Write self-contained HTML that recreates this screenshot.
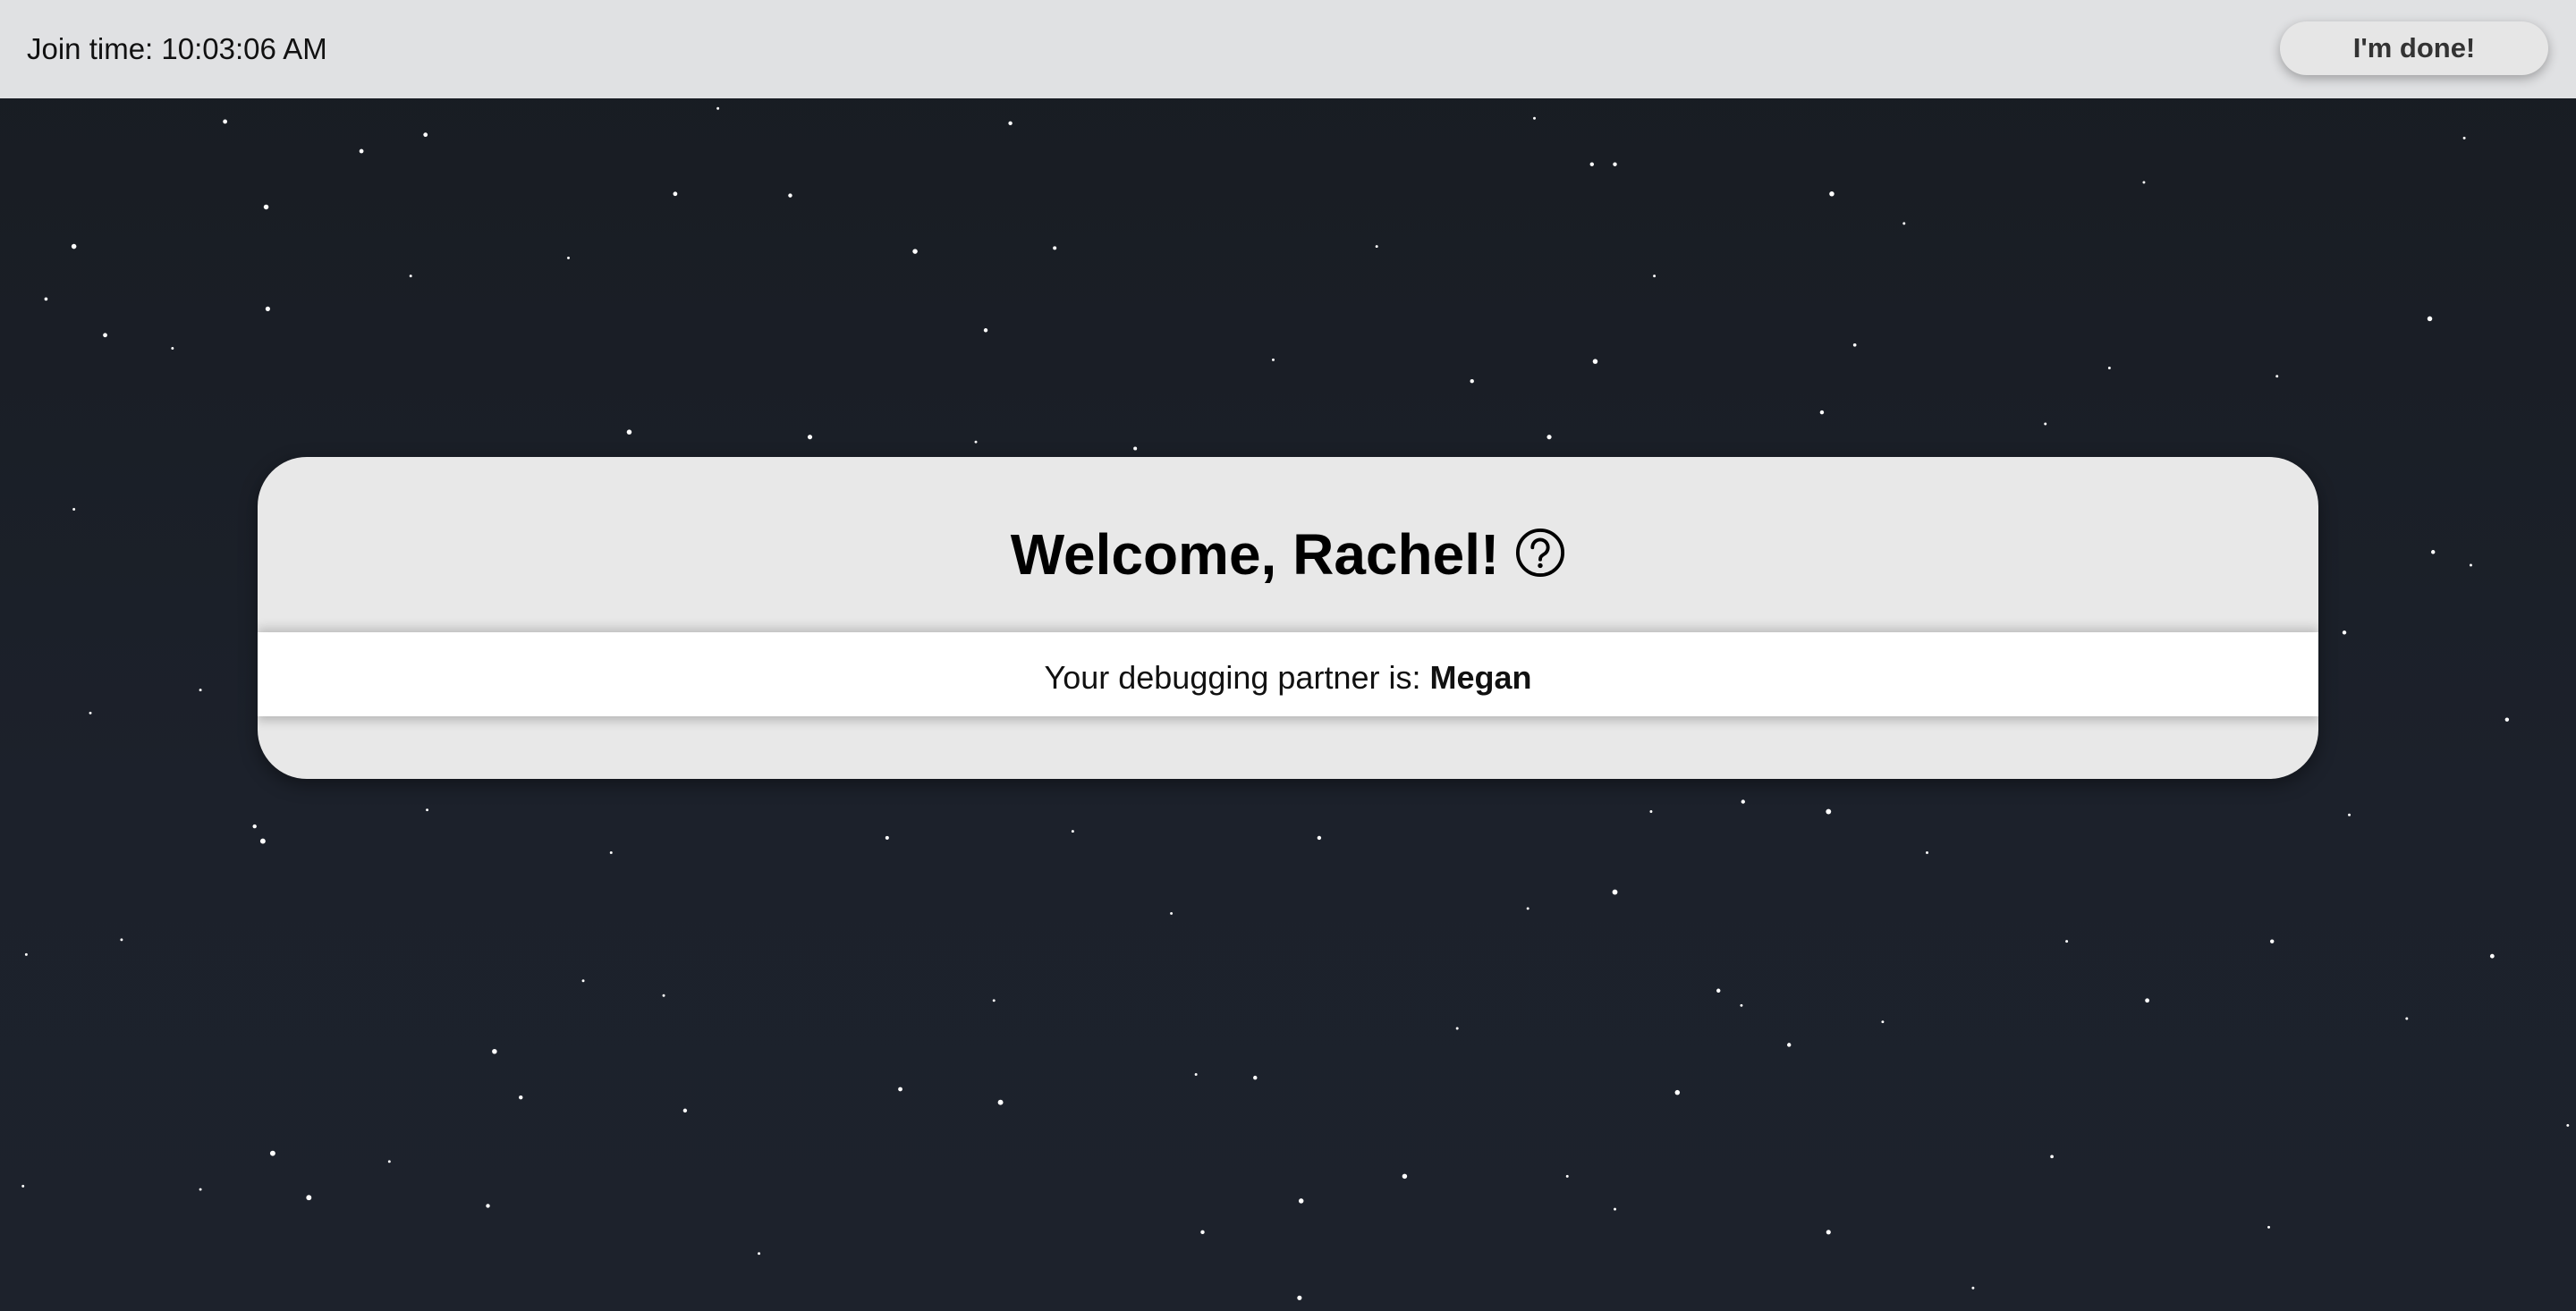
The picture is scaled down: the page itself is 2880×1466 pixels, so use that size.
<!DOCTYPE html>
<html><head><meta charset="utf-8"><style>
html,body{margin:0;padding:0;width:2880px;height:1466px;overflow:hidden;font-family:"Liberation Sans",sans-serif;}
body{background:linear-gradient(180deg,#181c22 0%,#1c212b 60%,#1d222c 100%);position:relative;}
#stars{position:absolute;left:0;top:0;}
.top{position:absolute;left:0;top:0;width:2880px;height:110px;background:#e0e1e3;}
.jt{position:absolute;left:30px;top:36px;font-size:33px;color:#111;}
.btn{position:absolute;left:2549px;top:24px;width:300px;height:60px;border-radius:30px;background:#e6e6e6;box-shadow:0 4px 12px rgba(0,0,0,.3);font-weight:bold;font-size:31px;color:#333;text-align:center;line-height:60px;}
.card{position:absolute;left:288px;top:511px;width:2304px;height:360px;border-radius:55px;background:#e8e8e8;overflow:hidden;box-shadow:0 6px 20px rgba(0,0,0,.4);}
.title{position:absolute;left:0;right:0;top:72px;text-align:center;font-size:64px;font-weight:bold;color:#000;}
.title svg{vertical-align:-4px;margin-left:18px;}
.band{position:absolute;left:0;right:0;top:196px;height:94px;background:#fff;box-shadow:0 -6px 10px rgba(0,0,0,.15),0 6px 10px rgba(0,0,0,.18);text-align:center;line-height:102px;font-size:36px;color:#111;}
.band b{font-weight:bold;}
</style></head><body>
<svg id="stars" width="2880" height="1466" viewBox="0 0 1568 798" preserveAspectRatio="none" fill="#fff">
<g>
<circle cx="137" cy="74" r="1.3"/><circle cx="220" cy="92" r="1.3"/><circle cx="259" cy="82" r="1.3"/><circle cx="162" cy="126" r="1.5"/><circle cx="45" cy="150" r="1.5"/><circle cx="163" cy="188" r="1.4"/><circle cx="64" cy="204" r="1.3"/><circle cx="28" cy="182" r="1"/><circle cx="411" cy="118" r="1.3"/><circle cx="481" cy="119" r="1.2"/><circle cx="557" cy="153" r="1.5"/><circle cx="600" cy="201" r="1.2"/><circle cx="642" cy="151" r="1.1"/><circle cx="615" cy="75" r="1.2"/><circle cx="383" cy="263" r="1.5"/><circle cx="493" cy="266" r="1.4"/><circle cx="691" cy="273" r="1.1"/><circle cx="969" cy="100" r="1.2"/><circle cx="983" cy="100" r="1.2"/><circle cx="1115" cy="118" r="1.5"/><circle cx="971" cy="220" r="1.5"/><circle cx="896" cy="232" r="1.2"/><circle cx="943" cy="266" r="1.4"/><circle cx="1109" cy="251" r="1.2"/><circle cx="1129" cy="210" r="1"/><circle cx="1479" cy="194" r="1.5"/><circle cx="1481" cy="336" r="1.2"/><circle cx="1427" cy="385" r="1.2"/><circle cx="1526" cy="438" r="1.2"/><circle cx="1113" cy="494" r="1.6"/><circle cx="1061" cy="488" r="1.2"/><circle cx="983" cy="543" r="1.6"/><circle cx="803" cy="510" r="1.2"/><circle cx="540" cy="510" r="1.1"/><circle cx="160" cy="512" r="1.6"/><circle cx="155" cy="503" r="1.2"/><circle cx="1307" cy="609" r="1.3"/><circle cx="1383" cy="573" r="1.2"/><circle cx="1517" cy="582" r="1.3"/><circle cx="1046" cy="603" r="1.2"/><circle cx="1021" cy="665" r="1.5"/><circle cx="855" cy="716" r="1.5"/><circle cx="792" cy="731" r="1.5"/><circle cx="732" cy="750" r="1.2"/><circle cx="609" cy="671" r="1.6"/><circle cx="548" cy="663" r="1.3"/><circle cx="417" cy="676" r="1.2"/><circle cx="301" cy="640" r="1.5"/><circle cx="317" cy="668" r="1.2"/><circle cx="166" cy="702" r="1.6"/><circle cx="188" cy="729" r="1.6"/><circle cx="297" cy="734" r="1.2"/><circle cx="1113" cy="750" r="1.4"/><circle cx="1089" cy="636" r="1.2"/><circle cx="764" cy="656" r="1.2"/><circle cx="791" cy="790" r="1.4"/><circle cx="1249" cy="704" r="1"/><circle cx="1305" cy="111" r="0.8"/><circle cx="1500" cy="84" r="0.8"/><circle cx="1386" cy="229" r="0.8"/><circle cx="1245" cy="258" r="0.8"/><circle cx="1504" cy="344" r="0.8"/><circle cx="1430" cy="496" r="0.8"/><circle cx="1258" cy="573" r="0.8"/><circle cx="1563" cy="685" r="0.8"/><circle cx="1201" cy="784" r="0.8"/><circle cx="954" cy="716" r="0.8"/><circle cx="887" cy="626" r="0.8"/><circle cx="713" cy="556" r="0.8"/><circle cx="605" cy="609" r="0.8"/><circle cx="355" cy="597" r="0.8"/><circle cx="74" cy="572" r="0.8"/><circle cx="16" cy="581" r="0.8"/><circle cx="45" cy="310" r="0.8"/><circle cx="122" cy="420" r="0.8"/><circle cx="55" cy="434" r="0.8"/><circle cx="105" cy="212" r="0.8"/><circle cx="346" cy="157" r="0.8"/><circle cx="250" cy="168" r="0.8"/><circle cx="437" cy="66" r="0.8"/><circle cx="838" cy="150" r="0.8"/><circle cx="934" cy="72" r="0.8"/><circle cx="1007" cy="168" r="0.8"/><circle cx="1159" cy="136" r="0.8"/><circle cx="1284" cy="224" r="0.8"/><circle cx="775" cy="219" r="0.8"/><circle cx="594" cy="269" r="0.8"/><circle cx="260" cy="493" r="0.8"/><circle cx="372" cy="519" r="0.8"/><circle cx="653" cy="506" r="0.8"/><circle cx="930" cy="553" r="0.8"/><circle cx="1173" cy="519" r="0.8"/><circle cx="1005" cy="494" r="0.8"/><circle cx="1465" cy="620" r="0.8"/><circle cx="1146" cy="622" r="0.8"/><circle cx="1060" cy="612" r="0.8"/><circle cx="728" cy="654" r="0.8"/><circle cx="404" cy="606" r="0.8"/><circle cx="237" cy="707" r="0.8"/><circle cx="122" cy="724" r="0.8"/><circle cx="14" cy="722" r="0.8"/><circle cx="462" cy="763" r="0.8"/><circle cx="983" cy="736" r="0.8"/><circle cx="1381" cy="747" r="0.8"/>
</g></svg>
<div class="top"><div class="jt">Join time: 10:03:06 AM</div><div class="btn">I'm done!</div></div>
<div class="card">
<div class="title">Welcome, Rachel!<svg width="56" height="56" viewBox="0 0 58 58"><circle cx="29" cy="29" r="26" fill="none" stroke="#000" stroke-width="4"/><path d="M20 23a9 9 0 1 1 13 8c-3 2-4 3-4 6" fill="none" stroke="#000" stroke-width="4" stroke-linecap="round"/><circle cx="29" cy="44" r="2.8" fill="#000"/></svg></div>
<div class="band">Your debugging partner is: <b>Megan</b></div>
</div>
</body></html>
